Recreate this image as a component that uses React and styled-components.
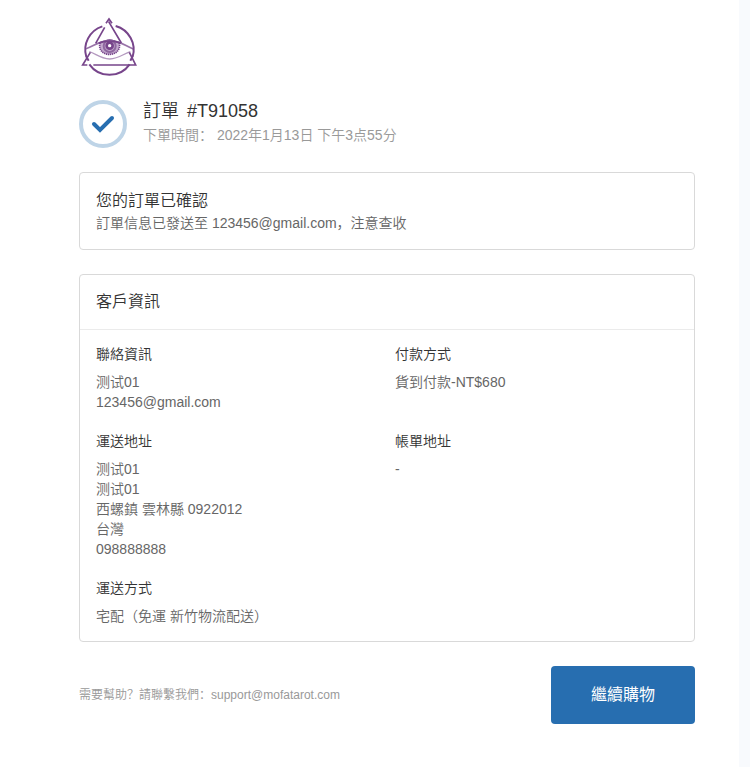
import React from "react";
import styled, { createGlobalStyle } from "styled-components";

const GlobalStyle = createGlobalStyle`
  *, *::before, *::after { box-sizing: border-box; }
  body {
    margin: 0;
    background: #fff;
    color: #333;
    font-family: "Liberation Sans", "Noto Sans CJK SC", sans-serif;
    font-size: 14px;
    font-weight: 350;
    line-height: 20px;
  }
  h1, h2, h3, p { margin: 0; font: inherit; }
`;

const Page = styled.div`
  display: flex;
  min-height: 100vh;
`;

const Main = styled.main`
  flex: 1;
  min-width: 0;
  padding: 16px 44px 40px 79px;
`;

const Rail = styled.aside`
  flex: 0 0 11px;
  background: #f8fafd;
`;

const LogoLink = styled.a`
  display: block;
  width: 60px;
  height: 60px;

  svg { display: block; }
`;

const OrderHeader = styled.header`
  display: flex;
  align-items: center;
  gap: 16px;
  margin: 24px 0;

  svg { flex: none; }
`;

const OrderTitle = styled.h1`
  && {
    display: flex;
    gap: 8px;
    font-size: 18px;
    line-height: 22px;
  }
`;

const OrderDate = styled.p`
  && {
    color: #999;
    line-height: 26px;
  }
`;

const Card = styled.section`
  margin-bottom: 24px;
  border: 1px solid #d9d9d9;
  border-radius: 4px;
`;

const Notice = styled.div`
  padding: 16px;
`;

const CardTitle = styled.h2`
  && {
    font-size: 16px;
    line-height: 24px;
  }
`;

const CardHeader = styled.div`
  padding: 15px 16px;
  border-bottom: 1px solid #ebebeb;
`;

const Details = styled.div`
  display: grid;
  grid-template-columns: 1fr 1fr;
  gap: 19px 16px;
  padding: 14px 16px 15px;
`;

const DetailTitle = styled.h3`
  && { margin-bottom: 8px; }
`;

const Muted = styled.p`
  color: #666;
`;

const Footer = styled.footer`
  display: flex;
  align-items: center;
  justify-content: space-between;
  gap: 16px;
`;

const Help = styled.p`
  && {
    color: #999;
    font-size: 12px;
    line-height: 20px;
  }

  a {
    color: inherit;
    text-decoration: none;
  }
`;

const PrimaryButton = styled.button`
  padding: 17px 40px;
  border: 0;
  border-radius: 4px;
  background: #276eb0;
  color: #fff;
  font: inherit;
  font-size: 16px;
  font-weight: 400;
  line-height: 24px;
  cursor: pointer;
`;

const Logo = () => (
  <svg width="60" height="60" viewBox="27 24 180 180" fill="none" stroke="#77458b" aria-hidden="true">
    <path d="M49 147A74 74 0 0 1 97 55M137 54A74 74 0 0 1 188 146M179 169A74 74 0 0 1 58 169M56 158L48 144M181 158L188 145" strokeWidth="6" />
    <path d="M77 106L104 58M108 46L117 33L126 46M116 41L154 105M61 133L38 171H52M70 171H197L178 133" strokeWidth="5" />
    <path d="M46 123C70 115 88 98 119 97C150 98 166 114 190 123" strokeWidth="5" opacity=".75" />
    <path d="M58 131C78 137 90 152 119 153C148 152 160 137 181 131" strokeWidth="4" opacity=".55" />
    <path d="M90 104C79 151 157 151 148 104C130 97 108 97 90 104Z" fill="#c4aace" strokeWidth="5" strokeDasharray="4 2" />
    <circle cx="119" cy="114" r="18" stroke="#8f68a0" strokeWidth="6" />
    <circle cx="119" cy="113" r="9" fill="#fff" strokeWidth="8" />
    <path d="M86 106C104 97 134 97 152 106" strokeWidth="5" />
  </svg>
);

const ConfirmedIcon = () => (
  <svg width="48" height="48" viewBox="0 0 48 48" fill="none" aria-hidden="true">
    <circle cx="24" cy="24" r="22" stroke="#bed4e7" strokeWidth="4" />
    <path d="M15 24L21 30L33 18" stroke="#276eb0" strokeWidth="4" strokeLinecap="round" />
  </svg>
);

const details = [
  { title: "聯絡資訊", lines: ["测试01", "123456@gmail.com"] },
  { title: "付款方式", lines: ["貨到付款-NT$680"] },
  {
    title: "運送地址",
    lines: ["测试01", "测试01", "西螺鎮 雲林縣 0922012", "台灣", "098888888"],
  },
  { title: "帳單地址", lines: ["-"] },
  { title: "運送方式", lines: ["宅配（免運 新竹物流配送）"] },
];

export default function App() {
  return (
    <>
      <GlobalStyle />
      <Page lang="zh-Hans">
        <Main>
          <LogoLink href="#" aria-label="Mofa Tarot">
            <Logo />
          </LogoLink>
          <OrderHeader>
            <ConfirmedIcon />
            <div>
              <OrderTitle>
                <span>訂單</span>
                <span>#T91058</span>
              </OrderTitle>
              <OrderDate>下單時間： 2022年1月13日 下午3点55分</OrderDate>
            </div>
          </OrderHeader>
          <Card>
            <Notice>
              <CardTitle>您的訂單已確認</CardTitle>
              <Muted>訂單信息已發送至 123456@gmail.com，注意查收</Muted>
            </Notice>
          </Card>
          <Card>
            <CardHeader>
              <CardTitle>客戶資訊</CardTitle>
            </CardHeader>
            <Details>
              {details.map(({ title, lines }) => (
                <div key={title}>
                  <DetailTitle>{title}</DetailTitle>
                  {lines.map((line, i) => (
                    <Muted key={i}>{line}</Muted>
                  ))}
                </div>
              ))}
            </Details>
          </Card>
          <Footer>
            <Help>
              需要幫助？請聯繫我們：<a href="mailto:support@mofatarot.com">support@mofatarot.com</a>
            </Help>
            <PrimaryButton type="button">繼續購物</PrimaryButton>
          </Footer>
        </Main>
        <Rail />
      </Page>
    </>
  );
}
